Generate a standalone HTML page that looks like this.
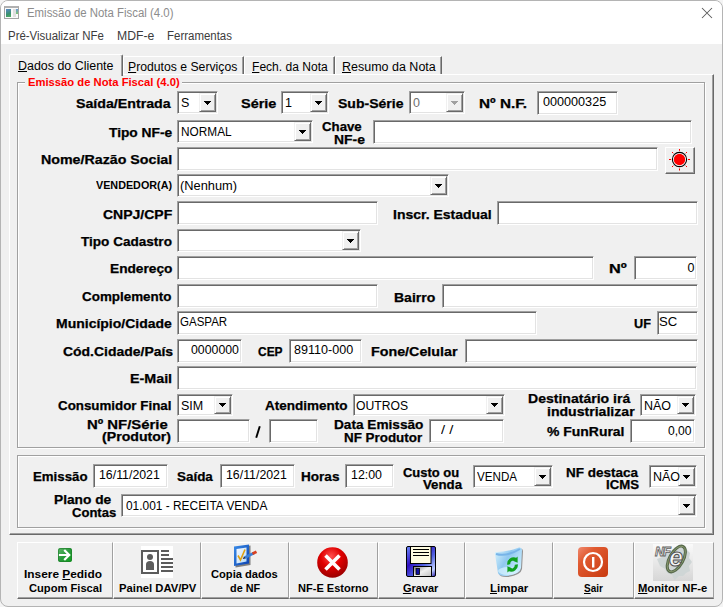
<!DOCTYPE html>
<html><head><meta charset="utf-8"><style>
html,body{margin:0;padding:0;width:723px;height:607px;overflow:hidden;background:#f4f4f4;}
#w{position:absolute;left:0;top:0;width:723px;height:607px;}
u{text-decoration:underline;text-underline-offset:1px;}
</style></head><body><div id="w">

<div style="position:absolute;left:0;top:0;width:723px;height:607px;border-radius:8px;background:#f0f0f0;border:1px solid #b4b4b4;box-sizing:border-box;overflow:hidden">
 <div style="position:absolute;left:0;top:0;width:721px;height:43px;background:#fff"></div>
</div>

<div style="position:absolute;left:4px;top:6px;width:15px;height:13px;border:1px solid #a4a4a4;border-top:2px solid #b0b0b0;box-sizing:border-box;background:#fafafa;"></div><div style="position:absolute;left:6px;top:9px;width:5px;height:8px;background:linear-gradient(160deg,#5a88c8,#3a9070 60%,#50b060);"></div><div style="position:absolute;left:13px;top:9px;width:3px;height:8px;background:#e0e0e0;"></div><div style="position:absolute;left:16px;top:9px;width:2px;height:5px;background:linear-gradient(#6a98d8,#80c870);"></div><svg style="position:absolute;left:700px;top:6px" width="14" height="14"><path d="M2 2 L12 12 M12 2 L2 12" stroke="#5a5a5a" stroke-width="1.05" fill="none"/></svg><div style="position:absolute;left:9px;top:74px;width:705px;height:461px;border-top:1px solid #fff;border-left:1px solid #fff;border-right:1px solid #696969;border-bottom:1px solid #696969;box-sizing:border-box;box-shadow:inset -1px -1px 0 #a0a0a0;"></div><div style="position:absolute;left:123px;top:56px;width:121px;height:18px;border-top:1px solid #fff;border-left:1px solid #fff;border-right:1px solid #696969;box-sizing:border-box;box-shadow:inset -1px 0 0 #a0a0a0;background:#f0f0f0;border-top-left-radius:2px;"></div><div style="position:absolute;left:244px;top:56px;width:91px;height:18px;border-top:1px solid #fff;border-left:1px solid #fff;border-right:1px solid #696969;box-sizing:border-box;box-shadow:inset -1px 0 0 #a0a0a0;background:#f0f0f0;border-top-left-radius:2px;"></div><div style="position:absolute;left:335px;top:56px;width:107px;height:18px;border-top:1px solid #fff;border-left:1px solid #fff;border-right:1px solid #696969;box-sizing:border-box;box-shadow:inset -1px 0 0 #a0a0a0;background:#f0f0f0;border-top-left-radius:2px;"></div><div style="position:absolute;left:9px;top:54px;width:114px;height:22px;border-top:1px solid #fff;border-left:1px solid #fff;border-right:1px solid #696969;box-sizing:border-box;box-shadow:inset -1px 0 0 #a0a0a0;background:#f0f0f0;border-top-left-radius:2px;border-top-right-radius:2px;"></div><div style="position:absolute;left:18px;top:83px;width:688px;height:366px;border:1px solid #fff;box-sizing:border-box;"></div><div style="position:absolute;left:17px;top:82px;width:688px;height:366px;border:1px solid #a0a0a0;box-sizing:border-box;"></div><div style="position:absolute;left:25px;top:78px;width:157px;height:11px;background:#f0f0f0;"></div><svg style="position:absolute;left:250px;top:420px" width="20" height="26"><path d="M9.8 6.2 L6.2 17.8" stroke="#000" stroke-width="1.9"/></svg><div style="position:absolute;left:177px;top:91px;width:41px;height:23px;background:#fff;border-top:1px solid #a0a0a0;border-left:1px solid #a0a0a0;border-right:1px solid #fff;border-bottom:1px solid #fff;box-sizing:border-box;box-shadow:inset 1px 1px 0 #696969, inset -1px -1px 0 #e3e3e3;background:#fff;"></div><div style="position:absolute;left:199px;top:93px;width:17px;height:19px;background:#f0f0f0;border-top:1px solid #f0f0f0;border-left:1px solid #f0f0f0;border-right:1px solid #696969;border-bottom:1px solid #696969;box-sizing:border-box;box-shadow:inset 1px 1px 0 #fff, inset -1px -1px 0 #a0a0a0;"></div><div style="position:absolute;left:204px;top:101px;width:7px;height:1px;background:#000"></div><div style="position:absolute;left:205px;top:102px;width:5px;height:1px;background:#000"></div><div style="position:absolute;left:206px;top:103px;width:3px;height:1px;background:#000"></div><div style="position:absolute;left:207px;top:104px;width:1px;height:1px;background:#000"></div><div style="position:absolute;left:281px;top:91px;width:48px;height:23px;background:#fff;border-top:1px solid #a0a0a0;border-left:1px solid #a0a0a0;border-right:1px solid #fff;border-bottom:1px solid #fff;box-sizing:border-box;box-shadow:inset 1px 1px 0 #696969, inset -1px -1px 0 #e3e3e3;background:#fff;"></div><div style="position:absolute;left:310px;top:93px;width:17px;height:19px;background:#f0f0f0;border-top:1px solid #f0f0f0;border-left:1px solid #f0f0f0;border-right:1px solid #696969;border-bottom:1px solid #696969;box-sizing:border-box;box-shadow:inset 1px 1px 0 #fff, inset -1px -1px 0 #a0a0a0;"></div><div style="position:absolute;left:315px;top:101px;width:7px;height:1px;background:#000"></div><div style="position:absolute;left:316px;top:102px;width:5px;height:1px;background:#000"></div><div style="position:absolute;left:317px;top:103px;width:3px;height:1px;background:#000"></div><div style="position:absolute;left:318px;top:104px;width:1px;height:1px;background:#000"></div><div style="position:absolute;left:409px;top:91px;width:56px;height:23px;background:#fff;border-top:1px solid #a0a0a0;border-left:1px solid #a0a0a0;border-right:1px solid #fff;border-bottom:1px solid #fff;box-sizing:border-box;box-shadow:inset 1px 1px 0 #696969, inset -1px -1px 0 #e3e3e3;background:#fff;"></div><div style="position:absolute;left:446px;top:93px;width:17px;height:19px;background:#f0f0f0;border-top:1px solid #f0f0f0;border-left:1px solid #f0f0f0;border-right:1px solid #696969;border-bottom:1px solid #696969;box-sizing:border-box;box-shadow:inset 1px 1px 0 #fff, inset -1px -1px 0 #a0a0a0;"></div><div style="position:absolute;left:451px;top:101px;width:7px;height:1px;background:#a0a0a0"></div><div style="position:absolute;left:452px;top:102px;width:5px;height:1px;background:#a0a0a0"></div><div style="position:absolute;left:453px;top:103px;width:3px;height:1px;background:#a0a0a0"></div><div style="position:absolute;left:454px;top:104px;width:1px;height:1px;background:#a0a0a0"></div><div style="position:absolute;left:537px;top:91px;width:81px;height:24px;background:#fff;border-top:1px solid #a0a0a0;border-left:1px solid #a0a0a0;border-right:1px solid #fff;border-bottom:1px solid #fff;box-sizing:border-box;box-shadow:inset 1px 1px 0 #696969, inset -1px -1px 0 #e3e3e3;"></div><div style="position:absolute;left:177px;top:120px;width:136px;height:23px;background:#fff;border-top:1px solid #a0a0a0;border-left:1px solid #a0a0a0;border-right:1px solid #fff;border-bottom:1px solid #fff;box-sizing:border-box;box-shadow:inset 1px 1px 0 #696969, inset -1px -1px 0 #e3e3e3;background:#fff;"></div><div style="position:absolute;left:294px;top:122px;width:17px;height:19px;background:#f0f0f0;border-top:1px solid #f0f0f0;border-left:1px solid #f0f0f0;border-right:1px solid #696969;border-bottom:1px solid #696969;box-sizing:border-box;box-shadow:inset 1px 1px 0 #fff, inset -1px -1px 0 #a0a0a0;"></div><div style="position:absolute;left:299px;top:130px;width:7px;height:1px;background:#000"></div><div style="position:absolute;left:300px;top:131px;width:5px;height:1px;background:#000"></div><div style="position:absolute;left:301px;top:132px;width:3px;height:1px;background:#000"></div><div style="position:absolute;left:302px;top:133px;width:1px;height:1px;background:#000"></div><div style="position:absolute;left:373px;top:120px;width:319px;height:24px;background:#fff;border-top:1px solid #a0a0a0;border-left:1px solid #a0a0a0;border-right:1px solid #fff;border-bottom:1px solid #fff;box-sizing:border-box;box-shadow:inset 1px 1px 0 #696969, inset -1px -1px 0 #e3e3e3;"></div><div style="position:absolute;left:177px;top:147px;width:481px;height:24px;background:#fff;border-top:1px solid #a0a0a0;border-left:1px solid #a0a0a0;border-right:1px solid #fff;border-bottom:1px solid #fff;box-sizing:border-box;box-shadow:inset 1px 1px 0 #696969, inset -1px -1px 0 #e3e3e3;"></div><div style="position:absolute;left:177px;top:174px;width:272px;height:23px;background:#fff;border-top:1px solid #a0a0a0;border-left:1px solid #a0a0a0;border-right:1px solid #fff;border-bottom:1px solid #fff;box-sizing:border-box;box-shadow:inset 1px 1px 0 #696969, inset -1px -1px 0 #e3e3e3;background:#fff;"></div><div style="position:absolute;left:430px;top:176px;width:17px;height:19px;background:#f0f0f0;border-top:1px solid #f0f0f0;border-left:1px solid #f0f0f0;border-right:1px solid #696969;border-bottom:1px solid #696969;box-sizing:border-box;box-shadow:inset 1px 1px 0 #fff, inset -1px -1px 0 #a0a0a0;"></div><div style="position:absolute;left:435px;top:184px;width:7px;height:1px;background:#000"></div><div style="position:absolute;left:436px;top:185px;width:5px;height:1px;background:#000"></div><div style="position:absolute;left:437px;top:186px;width:3px;height:1px;background:#000"></div><div style="position:absolute;left:438px;top:187px;width:1px;height:1px;background:#000"></div><div style="position:absolute;left:177px;top:201px;width:201px;height:24px;background:#fff;border-top:1px solid #a0a0a0;border-left:1px solid #a0a0a0;border-right:1px solid #fff;border-bottom:1px solid #fff;box-sizing:border-box;box-shadow:inset 1px 1px 0 #696969, inset -1px -1px 0 #e3e3e3;"></div><div style="position:absolute;left:497px;top:201px;width:201px;height:24px;background:#fff;border-top:1px solid #a0a0a0;border-left:1px solid #a0a0a0;border-right:1px solid #fff;border-bottom:1px solid #fff;box-sizing:border-box;box-shadow:inset 1px 1px 0 #696969, inset -1px -1px 0 #e3e3e3;"></div><div style="position:absolute;left:177px;top:229px;width:184px;height:23px;background:#fff;border-top:1px solid #a0a0a0;border-left:1px solid #a0a0a0;border-right:1px solid #fff;border-bottom:1px solid #fff;box-sizing:border-box;box-shadow:inset 1px 1px 0 #696969, inset -1px -1px 0 #e3e3e3;background:#fff;"></div><div style="position:absolute;left:342px;top:231px;width:17px;height:19px;background:#f0f0f0;border-top:1px solid #f0f0f0;border-left:1px solid #f0f0f0;border-right:1px solid #696969;border-bottom:1px solid #696969;box-sizing:border-box;box-shadow:inset 1px 1px 0 #fff, inset -1px -1px 0 #a0a0a0;"></div><div style="position:absolute;left:347px;top:239px;width:7px;height:1px;background:#000"></div><div style="position:absolute;left:348px;top:240px;width:5px;height:1px;background:#000"></div><div style="position:absolute;left:349px;top:241px;width:3px;height:1px;background:#000"></div><div style="position:absolute;left:350px;top:242px;width:1px;height:1px;background:#000"></div><div style="position:absolute;left:177px;top:256px;width:417px;height:24px;background:#fff;border-top:1px solid #a0a0a0;border-left:1px solid #a0a0a0;border-right:1px solid #fff;border-bottom:1px solid #fff;box-sizing:border-box;box-shadow:inset 1px 1px 0 #696969, inset -1px -1px 0 #e3e3e3;"></div><div style="position:absolute;left:634px;top:256px;width:63px;height:24px;background:#fff;border-top:1px solid #a0a0a0;border-left:1px solid #a0a0a0;border-right:1px solid #fff;border-bottom:1px solid #fff;box-sizing:border-box;box-shadow:inset 1px 1px 0 #696969, inset -1px -1px 0 #e3e3e3;"></div><div style="position:absolute;left:177px;top:284px;width:201px;height:24px;background:#fff;border-top:1px solid #a0a0a0;border-left:1px solid #a0a0a0;border-right:1px solid #fff;border-bottom:1px solid #fff;box-sizing:border-box;box-shadow:inset 1px 1px 0 #696969, inset -1px -1px 0 #e3e3e3;"></div><div style="position:absolute;left:442px;top:284px;width:256px;height:24px;background:#fff;border-top:1px solid #a0a0a0;border-left:1px solid #a0a0a0;border-right:1px solid #fff;border-bottom:1px solid #fff;box-sizing:border-box;box-shadow:inset 1px 1px 0 #696969, inset -1px -1px 0 #e3e3e3;"></div><div style="position:absolute;left:177px;top:311px;width:360px;height:24px;background:#fff;border-top:1px solid #a0a0a0;border-left:1px solid #a0a0a0;border-right:1px solid #fff;border-bottom:1px solid #fff;box-sizing:border-box;box-shadow:inset 1px 1px 0 #696969, inset -1px -1px 0 #e3e3e3;"></div><div style="position:absolute;left:657px;top:311px;width:41px;height:24px;background:#fff;border-top:1px solid #a0a0a0;border-left:1px solid #a0a0a0;border-right:1px solid #fff;border-bottom:1px solid #fff;box-sizing:border-box;box-shadow:inset 1px 1px 0 #696969, inset -1px -1px 0 #e3e3e3;"></div><div style="position:absolute;left:177px;top:339px;width:65px;height:24px;background:#fff;border-top:1px solid #a0a0a0;border-left:1px solid #a0a0a0;border-right:1px solid #fff;border-bottom:1px solid #fff;box-sizing:border-box;box-shadow:inset 1px 1px 0 #696969, inset -1px -1px 0 #e3e3e3;"></div><div style="position:absolute;left:289px;top:339px;width:73px;height:24px;background:#fff;border-top:1px solid #a0a0a0;border-left:1px solid #a0a0a0;border-right:1px solid #fff;border-bottom:1px solid #fff;box-sizing:border-box;box-shadow:inset 1px 1px 0 #696969, inset -1px -1px 0 #e3e3e3;"></div><div style="position:absolute;left:465px;top:339px;width:233px;height:24px;background:#fff;border-top:1px solid #a0a0a0;border-left:1px solid #a0a0a0;border-right:1px solid #fff;border-bottom:1px solid #fff;box-sizing:border-box;box-shadow:inset 1px 1px 0 #696969, inset -1px -1px 0 #e3e3e3;"></div><div style="position:absolute;left:177px;top:366px;width:520px;height:24px;background:#fff;border-top:1px solid #a0a0a0;border-left:1px solid #a0a0a0;border-right:1px solid #fff;border-bottom:1px solid #fff;box-sizing:border-box;box-shadow:inset 1px 1px 0 #696969, inset -1px -1px 0 #e3e3e3;"></div><div style="position:absolute;left:177px;top:394px;width:56px;height:22px;background:#fff;border-top:1px solid #a0a0a0;border-left:1px solid #a0a0a0;border-right:1px solid #fff;border-bottom:1px solid #fff;box-sizing:border-box;box-shadow:inset 1px 1px 0 #696969, inset -1px -1px 0 #e3e3e3;background:#fff;"></div><div style="position:absolute;left:214px;top:396px;width:17px;height:18px;background:#f0f0f0;border-top:1px solid #f0f0f0;border-left:1px solid #f0f0f0;border-right:1px solid #696969;border-bottom:1px solid #696969;box-sizing:border-box;box-shadow:inset 1px 1px 0 #fff, inset -1px -1px 0 #a0a0a0;"></div><div style="position:absolute;left:219px;top:403px;width:7px;height:1px;background:#000"></div><div style="position:absolute;left:220px;top:404px;width:5px;height:1px;background:#000"></div><div style="position:absolute;left:221px;top:405px;width:3px;height:1px;background:#000"></div><div style="position:absolute;left:222px;top:406px;width:1px;height:1px;background:#000"></div><div style="position:absolute;left:353px;top:394px;width:152px;height:22px;background:#fff;border-top:1px solid #a0a0a0;border-left:1px solid #a0a0a0;border-right:1px solid #fff;border-bottom:1px solid #fff;box-sizing:border-box;box-shadow:inset 1px 1px 0 #696969, inset -1px -1px 0 #e3e3e3;background:#fff;"></div><div style="position:absolute;left:486px;top:396px;width:17px;height:18px;background:#f0f0f0;border-top:1px solid #f0f0f0;border-left:1px solid #f0f0f0;border-right:1px solid #696969;border-bottom:1px solid #696969;box-sizing:border-box;box-shadow:inset 1px 1px 0 #fff, inset -1px -1px 0 #a0a0a0;"></div><div style="position:absolute;left:491px;top:403px;width:7px;height:1px;background:#000"></div><div style="position:absolute;left:492px;top:404px;width:5px;height:1px;background:#000"></div><div style="position:absolute;left:493px;top:405px;width:3px;height:1px;background:#000"></div><div style="position:absolute;left:494px;top:406px;width:1px;height:1px;background:#000"></div><div style="position:absolute;left:640px;top:394px;width:56px;height:22px;background:#fff;border-top:1px solid #a0a0a0;border-left:1px solid #a0a0a0;border-right:1px solid #fff;border-bottom:1px solid #fff;box-sizing:border-box;box-shadow:inset 1px 1px 0 #696969, inset -1px -1px 0 #e3e3e3;background:#fff;"></div><div style="position:absolute;left:677px;top:396px;width:17px;height:18px;background:#f0f0f0;border-top:1px solid #f0f0f0;border-left:1px solid #f0f0f0;border-right:1px solid #696969;border-bottom:1px solid #696969;box-sizing:border-box;box-shadow:inset 1px 1px 0 #fff, inset -1px -1px 0 #a0a0a0;"></div><div style="position:absolute;left:682px;top:403px;width:7px;height:1px;background:#000"></div><div style="position:absolute;left:683px;top:404px;width:5px;height:1px;background:#000"></div><div style="position:absolute;left:684px;top:405px;width:3px;height:1px;background:#000"></div><div style="position:absolute;left:685px;top:406px;width:1px;height:1px;background:#000"></div><div style="position:absolute;left:177px;top:419px;width:73px;height:24px;background:#fff;border-top:1px solid #a0a0a0;border-left:1px solid #a0a0a0;border-right:1px solid #fff;border-bottom:1px solid #fff;box-sizing:border-box;box-shadow:inset 1px 1px 0 #696969, inset -1px -1px 0 #e3e3e3;"></div><div style="position:absolute;left:269px;top:419px;width:49px;height:24px;background:#fff;border-top:1px solid #a0a0a0;border-left:1px solid #a0a0a0;border-right:1px solid #fff;border-bottom:1px solid #fff;box-sizing:border-box;box-shadow:inset 1px 1px 0 #696969, inset -1px -1px 0 #e3e3e3;"></div><div style="position:absolute;left:429px;top:419px;width:75px;height:24px;background:#fff;border-top:1px solid #a0a0a0;border-left:1px solid #a0a0a0;border-right:1px solid #fff;border-bottom:1px solid #fff;box-sizing:border-box;box-shadow:inset 1px 1px 0 #696969, inset -1px -1px 0 #e3e3e3;"></div><div style="position:absolute;left:630px;top:419px;width:65px;height:24px;background:#fff;border-top:1px solid #a0a0a0;border-left:1px solid #a0a0a0;border-right:1px solid #fff;border-bottom:1px solid #fff;box-sizing:border-box;box-shadow:inset 1px 1px 0 #696969, inset -1px -1px 0 #e3e3e3;"></div><div style="position:absolute;left:665px;top:147px;width:30px;height:27px;background:#f0f0f0;border-top:1px solid #fff;border-left:1px solid #fff;border-right:1px solid #696969;border-bottom:1px solid #696969;box-sizing:border-box;box-shadow:inset -1px -1px 0 #a0a0a0;"></div><svg style="position:absolute;left:669px;top:149px" width="21" height="22" viewBox="0 0 21 22">
<g stroke="#ff0000" stroke-width="1">
<path d="M10.5 0 v1.8 M10.5 19.5 v2 M0 10.5 h2 M19 10.5 h2 M3 3 l1.3 1.3 M16.7 16.7 l1.3 1.3 M18 3 l-1.3 1.3 M4.3 16.7 l-1.3 1.3"/>
</g>
<circle cx="10.5" cy="10.5" r="7.1" fill="#fff" stroke="#000" stroke-width="1.1"/>
<circle cx="10.5" cy="10.5" r="5.7" fill="#ff0000"/>
</svg><div style="position:absolute;left:18px;top:456px;width:688px;height:73px;border:1px solid #fff;box-sizing:border-box;"></div><div style="position:absolute;left:17px;top:455px;width:688px;height:73px;border:1px solid #a0a0a0;box-sizing:border-box;"></div><div style="position:absolute;left:93px;top:464px;width:75px;height:24px;background:#fff;border-top:1px solid #a0a0a0;border-left:1px solid #a0a0a0;border-right:1px solid #fff;border-bottom:1px solid #fff;box-sizing:border-box;box-shadow:inset 1px 1px 0 #696969, inset -1px -1px 0 #e3e3e3;"></div><div style="position:absolute;left:220px;top:464px;width:75px;height:24px;background:#fff;border-top:1px solid #a0a0a0;border-left:1px solid #a0a0a0;border-right:1px solid #fff;border-bottom:1px solid #fff;box-sizing:border-box;box-shadow:inset 1px 1px 0 #696969, inset -1px -1px 0 #e3e3e3;"></div><div style="position:absolute;left:345px;top:464px;width:49px;height:24px;background:#fff;border-top:1px solid #a0a0a0;border-left:1px solid #a0a0a0;border-right:1px solid #fff;border-bottom:1px solid #fff;box-sizing:border-box;box-shadow:inset 1px 1px 0 #696969, inset -1px -1px 0 #e3e3e3;"></div><div style="position:absolute;left:473px;top:465px;width:80px;height:23px;background:#fff;border-top:1px solid #a0a0a0;border-left:1px solid #a0a0a0;border-right:1px solid #fff;border-bottom:1px solid #fff;box-sizing:border-box;box-shadow:inset 1px 1px 0 #696969, inset -1px -1px 0 #e3e3e3;background:#fff;"></div><div style="position:absolute;left:534px;top:467px;width:17px;height:19px;background:#f0f0f0;border-top:1px solid #f0f0f0;border-left:1px solid #f0f0f0;border-right:1px solid #696969;border-bottom:1px solid #696969;box-sizing:border-box;box-shadow:inset 1px 1px 0 #fff, inset -1px -1px 0 #a0a0a0;"></div><div style="position:absolute;left:539px;top:475px;width:7px;height:1px;background:#000"></div><div style="position:absolute;left:540px;top:476px;width:5px;height:1px;background:#000"></div><div style="position:absolute;left:541px;top:477px;width:3px;height:1px;background:#000"></div><div style="position:absolute;left:542px;top:478px;width:1px;height:1px;background:#000"></div><div style="position:absolute;left:649px;top:465px;width:48px;height:23px;background:#fff;border-top:1px solid #a0a0a0;border-left:1px solid #a0a0a0;border-right:1px solid #fff;border-bottom:1px solid #fff;box-sizing:border-box;box-shadow:inset 1px 1px 0 #696969, inset -1px -1px 0 #e3e3e3;background:#fff;"></div><div style="position:absolute;left:678px;top:467px;width:17px;height:19px;background:#f0f0f0;border-top:1px solid #f0f0f0;border-left:1px solid #f0f0f0;border-right:1px solid #696969;border-bottom:1px solid #696969;box-sizing:border-box;box-shadow:inset 1px 1px 0 #fff, inset -1px -1px 0 #a0a0a0;"></div><div style="position:absolute;left:683px;top:475px;width:7px;height:1px;background:#000"></div><div style="position:absolute;left:684px;top:476px;width:5px;height:1px;background:#000"></div><div style="position:absolute;left:685px;top:477px;width:3px;height:1px;background:#000"></div><div style="position:absolute;left:686px;top:478px;width:1px;height:1px;background:#000"></div><div style="position:absolute;left:121px;top:494px;width:576px;height:23px;background:#fff;border-top:1px solid #a0a0a0;border-left:1px solid #a0a0a0;border-right:1px solid #fff;border-bottom:1px solid #fff;box-sizing:border-box;box-shadow:inset 1px 1px 0 #696969, inset -1px -1px 0 #e3e3e3;background:#fff;"></div><div style="position:absolute;left:678px;top:496px;width:17px;height:19px;background:#f0f0f0;border-top:1px solid #f0f0f0;border-left:1px solid #f0f0f0;border-right:1px solid #696969;border-bottom:1px solid #696969;box-sizing:border-box;box-shadow:inset 1px 1px 0 #fff, inset -1px -1px 0 #a0a0a0;"></div><div style="position:absolute;left:683px;top:504px;width:7px;height:1px;background:#000"></div><div style="position:absolute;left:684px;top:505px;width:5px;height:1px;background:#000"></div><div style="position:absolute;left:685px;top:506px;width:3px;height:1px;background:#000"></div><div style="position:absolute;left:686px;top:507px;width:1px;height:1px;background:#000"></div><div style="position:absolute;left:17px;top:542px;width:96px;height:57px;border-top:1px solid #fff;border-left:1px solid #fff;border-right:1px solid #a0a0a0;border-bottom:1px solid #696969;box-sizing:border-box;box-shadow:inset 0 -1px 0 #a0a0a0;background:#f0f0f0;"></div><div style="position:absolute;left:113px;top:542px;width:88px;height:57px;border-top:1px solid #fff;border-left:1px solid #fff;border-right:1px solid #a0a0a0;border-bottom:1px solid #696969;box-sizing:border-box;box-shadow:inset 0 -1px 0 #a0a0a0;background:#f0f0f0;"></div><div style="position:absolute;left:201px;top:542px;width:88px;height:57px;border-top:1px solid #fff;border-left:1px solid #fff;border-right:1px solid #a0a0a0;border-bottom:1px solid #696969;box-sizing:border-box;box-shadow:inset 0 -1px 0 #a0a0a0;background:#f0f0f0;"></div><div style="position:absolute;left:289px;top:542px;width:89px;height:57px;border-top:1px solid #fff;border-left:1px solid #fff;border-right:1px solid #a0a0a0;border-bottom:1px solid #696969;box-sizing:border-box;box-shadow:inset 0 -1px 0 #a0a0a0;background:#f0f0f0;"></div><div style="position:absolute;left:378px;top:542px;width:87px;height:57px;border-top:1px solid #fff;border-left:1px solid #fff;border-right:1px solid #a0a0a0;border-bottom:1px solid #696969;box-sizing:border-box;box-shadow:inset 0 -1px 0 #a0a0a0;background:#f0f0f0;"></div><div style="position:absolute;left:465px;top:542px;width:88px;height:57px;border-top:1px solid #fff;border-left:1px solid #fff;border-right:1px solid #a0a0a0;border-bottom:1px solid #696969;box-sizing:border-box;box-shadow:inset 0 -1px 0 #a0a0a0;background:#f0f0f0;"></div><div style="position:absolute;left:553px;top:542px;width:81px;height:57px;border-top:1px solid #fff;border-left:1px solid #fff;border-right:1px solid #a0a0a0;border-bottom:1px solid #696969;box-sizing:border-box;box-shadow:inset 0 -1px 0 #a0a0a0;background:#f0f0f0;"></div><div style="position:absolute;left:634px;top:542px;width:80px;height:57px;border-top:1px solid #fff;border-left:1px solid #fff;border-right:1px solid #a0a0a0;border-bottom:1px solid #696969;box-sizing:border-box;box-shadow:inset 0 -1px 0 #a0a0a0;background:#f0f0f0;"></div>
<div id="t0" style="position:absolute;top:2.84px;font:12px 'Liberation Sans', sans-serif;line-height:20px;color:#8c8c8c;white-space:nowrap;transform:scaleX(0.9507);transform-origin:0 0;left:27.45px;">Emissão de Nota Fiscal (4.0)</div><div id="t1" style="position:absolute;top:25.84px;font:12px 'Liberation Sans', sans-serif;line-height:20px;color:#3c3c3c;white-space:nowrap;transform:scaleX(0.9535);transform-origin:0 0;left:7.65px;">Pré-Visualizar NFe</div><div id="t2" style="position:absolute;top:25.84px;font:12px 'Liberation Sans', sans-serif;line-height:20px;color:#3c3c3c;white-space:nowrap;transform:scaleX(1.0171);transform-origin:0 0;left:116.58px;">MDF-e</div><div id="t3" style="position:absolute;top:25.84px;font:12px 'Liberation Sans', sans-serif;line-height:20px;color:#3c3c3c;white-space:nowrap;transform:scaleX(0.9552);transform-origin:0 0;left:166.74px;">Ferramentas</div><div id="t4" style="position:absolute;top:55.84px;font:12px 'Liberation Sans', sans-serif;line-height:20px;color:#000;white-space:nowrap;transform:scaleX(1.0370);transform-origin:0 0;left:18.00px;"><u>D</u>ados do Cliente</div><div id="t5" style="position:absolute;top:56.84px;font:12px 'Liberation Sans', sans-serif;line-height:20px;color:#000;white-space:nowrap;transform:scaleX(1.0178);transform-origin:0 0;left:128.30px;"><u>P</u>rodutos e Serviços</div><div id="t6" style="position:absolute;top:56.84px;font:12px 'Liberation Sans', sans-serif;line-height:20px;color:#000;white-space:nowrap;transform:scaleX(1.0053);transform-origin:0 0;left:252.20px;"><u>F</u>ech. da Nota</div><div id="t7" style="position:absolute;top:56.84px;font:12px 'Liberation Sans', sans-serif;line-height:20px;color:#000;white-space:nowrap;transform:scaleX(1.0411);transform-origin:0 0;left:342.00px;"><u>R</u>esumo da Nota</div><div id="t8" style="position:absolute;top:72.19px;font:bold 11px 'Liberation Sans', sans-serif;line-height:20px;color:#ff0000;white-space:nowrap;transform:scaleX(1.0211);transform-origin:0 0;left:28.38px;">Emissão de Nota Fiscal (4.0)</div><div id="t9" style="position:absolute;top:94.24px;font:bold 12px 'Liberation Sans', sans-serif;line-height:20px;color:#000;white-space:nowrap;transform:scaleX(1.1825);transform-origin:0 0;-webkit-text-stroke:0.25px #000;left:76.40px;">Saída/Entrada</div><div id="t10" style="position:absolute;top:94.24px;font:bold 12px 'Liberation Sans', sans-serif;line-height:20px;color:#000;white-space:nowrap;transform:scaleX(1.2069);transform-origin:0 0;-webkit-text-stroke:0.25px #000;left:241.00px;">Série</div><div id="t11" style="position:absolute;top:94.24px;font:bold 12px 'Liberation Sans', sans-serif;line-height:20px;color:#000;white-space:nowrap;transform:scaleX(1.1679);transform-origin:0 0;-webkit-text-stroke:0.25px #000;left:338.00px;">Sub-Série</div><div id="t12" style="position:absolute;top:94.24px;font:bold 12px 'Liberation Sans', sans-serif;line-height:20px;color:#000;white-space:nowrap;transform:scaleX(1.2750);transform-origin:0 0;-webkit-text-stroke:0.25px #000;left:479.33px;">Nº N.F.</div><div id="t13" style="position:absolute;top:123.14px;font:bold 12px 'Liberation Sans', sans-serif;line-height:20px;color:#000;white-space:nowrap;transform:scaleX(1.1455);transform-origin:0 0;-webkit-text-stroke:0.25px #000;left:108.70px;">Tipo NF-e</div><div id="t14" style="position:absolute;top:116.54px;font:bold 12px 'Liberation Sans', sans-serif;line-height:20px;color:#000;white-space:nowrap;transform:scaleX(1.1028);transform-origin:0 0;-webkit-text-stroke:0.25px #000;left:322.00px;">Chave</div><div id="t15" style="position:absolute;top:129.74px;font:bold 12px 'Liberation Sans', sans-serif;line-height:20px;color:#000;white-space:nowrap;transform:scaleX(1.1577);transform-origin:0 0;-webkit-text-stroke:0.25px #000;left:334.44px;">NF-e</div><div id="t16" style="position:absolute;top:149.74px;font:bold 12px 'Liberation Sans', sans-serif;line-height:20px;color:#000;white-space:nowrap;transform:scaleX(1.1853);transform-origin:0 0;-webkit-text-stroke:0.25px #000;left:41.41px;">Nome/Razão Social</div><div id="t17" style="position:absolute;top:175.73px;font:bold 10px 'Liberation Sans', sans-serif;line-height:20px;color:#000;white-space:nowrap;transform:scaleX(1.0771);transform-origin:0 0;left:96.40px;">VENDEDOR(A)</div><div id="t18" style="position:absolute;top:204.54px;font:bold 12px 'Liberation Sans', sans-serif;line-height:20px;color:#000;white-space:nowrap;transform:scaleX(1.1661);transform-origin:0 0;-webkit-text-stroke:0.25px #000;left:103.00px;">CNPJ/CPF</div><div id="t19" style="position:absolute;top:204.54px;font:bold 12px 'Liberation Sans', sans-serif;line-height:20px;color:#000;white-space:nowrap;transform:scaleX(1.1651);transform-origin:0 0;-webkit-text-stroke:0.25px #000;left:393.13px;">Inscr. Estadual</div><div id="t20" style="position:absolute;top:231.84px;font:bold 12px 'Liberation Sans', sans-serif;line-height:20px;color:#000;white-space:nowrap;transform:scaleX(1.1300);transform-origin:0 0;-webkit-text-stroke:0.25px #000;left:81.40px;">Tipo Cadastro</div><div id="t21" style="position:absolute;top:259.04px;font:bold 12px 'Liberation Sans', sans-serif;line-height:20px;color:#000;white-space:nowrap;transform:scaleX(1.1415);transform-origin:0 0;-webkit-text-stroke:0.25px #000;left:110.16px;">Endereço</div><div id="t22" style="position:absolute;top:259.04px;font:bold 12px 'Liberation Sans', sans-serif;line-height:20px;color:#000;white-space:nowrap;transform:scaleX(1.3583);transform-origin:0 0;-webkit-text-stroke:0.25px #000;left:609.04px;">Nº</div><div id="t23" style="position:absolute;top:287.34px;font:bold 12px 'Liberation Sans', sans-serif;line-height:20px;color:#000;white-space:nowrap;transform:scaleX(1.1175);transform-origin:0 0;-webkit-text-stroke:0.25px #000;left:82.40px;">Complemento</div><div id="t24" style="position:absolute;top:287.54px;font:bold 12px 'Liberation Sans', sans-serif;line-height:20px;color:#000;white-space:nowrap;transform:scaleX(1.1676);transform-origin:0 0;-webkit-text-stroke:0.25px #000;left:393.83px;">Bairro</div><div id="t25" style="position:absolute;top:313.84px;font:bold 12px 'Liberation Sans', sans-serif;line-height:20px;color:#000;white-space:nowrap;transform:scaleX(1.1663);transform-origin:0 0;-webkit-text-stroke:0.25px #000;left:56.33px;">Município/Cidade</div><div id="t26" style="position:absolute;top:313.64px;font:bold 12px 'Liberation Sans', sans-serif;line-height:20px;color:#000;white-space:nowrap;transform:scaleX(1.0562);transform-origin:0 0;-webkit-text-stroke:0.25px #000;left:633.70px;">UF</div><div id="t27" style="position:absolute;top:342.14px;font:bold 12px 'Liberation Sans', sans-serif;line-height:20px;color:#000;white-space:nowrap;transform:scaleX(1.1628);transform-origin:0 0;-webkit-text-stroke:0.25px #000;left:62.50px;">Cód.Cidade/País</div><div id="t28" style="position:absolute;top:341.84px;font:bold 12px 'Liberation Sans', sans-serif;line-height:20px;color:#000;white-space:nowrap;transform:scaleX(0.9960);transform-origin:0 0;-webkit-text-stroke:0.25px #000;left:257.70px;">CEP</div><div id="t29" style="position:absolute;top:341.84px;font:bold 12px 'Liberation Sans', sans-serif;line-height:20px;color:#000;white-space:nowrap;transform:scaleX(1.1903);transform-origin:0 0;-webkit-text-stroke:0.25px #000;left:370.61px;">Fone/Celular</div><div id="t30" style="position:absolute;top:368.64px;font:bold 12px 'Liberation Sans', sans-serif;line-height:20px;color:#000;white-space:nowrap;transform:scaleX(1.1912);transform-origin:0 0;-webkit-text-stroke:0.25px #000;left:130.11px;">E-Mail</div><div id="t31" style="position:absolute;top:395.84px;font:bold 12px 'Liberation Sans', sans-serif;line-height:20px;color:#000;white-space:nowrap;transform:scaleX(1.1118);transform-origin:0 0;-webkit-text-stroke:0.25px #000;left:58.30px;">Consumidor Final</div><div id="t32" style="position:absolute;top:395.84px;font:bold 12px 'Liberation Sans', sans-serif;line-height:20px;color:#000;white-space:nowrap;transform:scaleX(1.1260);transform-origin:0 0;-webkit-text-stroke:0.25px #000;left:265.30px;">Atendimento</div><div id="t33" style="position:absolute;top:388.84px;font:bold 12px 'Liberation Sans', sans-serif;line-height:20px;color:#000;white-space:nowrap;transform:scaleX(1.1701);transform-origin:0 0;-webkit-text-stroke:0.25px #000;left:528.23px;">Destinatário irá</div><div id="t34" style="position:absolute;top:401.74px;font:bold 12px 'Liberation Sans', sans-serif;line-height:20px;color:#000;white-space:nowrap;transform:scaleX(1.1730);transform-origin:0 0;-webkit-text-stroke:0.25px #000;left:547.03px;">industrializar</div><div id="t35" style="position:absolute;top:415.04px;font:bold 12px 'Liberation Sans', sans-serif;line-height:20px;color:#000;white-space:nowrap;transform:scaleX(1.2406);transform-origin:0 0;-webkit-text-stroke:0.25px #000;left:86.96px;">Nº NF/Série</div><div id="t36" style="position:absolute;top:427.44px;font:bold 12px 'Liberation Sans', sans-serif;line-height:20px;color:#000;white-space:nowrap;transform:scaleX(1.1776);transform-origin:0 0;-webkit-text-stroke:0.25px #000;left:102.00px;">(Produtor)</div><div id="t37" style="position:absolute;top:415.14px;font:bold 12px 'Liberation Sans', sans-serif;line-height:20px;color:#000;white-space:nowrap;transform:scaleX(1.1364);transform-origin:0 0;-webkit-text-stroke:0.25px #000;left:333.86px;">Data Emissão</div><div id="t38" style="position:absolute;top:427.84px;font:bold 12px 'Liberation Sans', sans-serif;line-height:20px;color:#000;white-space:nowrap;transform:scaleX(1.1159);transform-origin:0 0;-webkit-text-stroke:0.25px #000;left:344.38px;">NF Produtor</div><div id="t39" style="position:absolute;top:422.04px;font:bold 12px 'Liberation Sans', sans-serif;line-height:20px;color:#000;white-space:nowrap;transform:scaleX(1.1621);transform-origin:0 0;-webkit-text-stroke:0.25px #000;left:547.30px;">% FunRural</div><div id="t40" style="position:absolute;top:92.67px;font:12.5px 'Liberation Sans', sans-serif;line-height:20px;color:#000;white-space:nowrap;transform:scaleX(1.0000);transform-origin:0 0;left:181.00px;">S</div><div id="t41" style="position:absolute;top:92.67px;font:12.5px 'Liberation Sans', sans-serif;line-height:20px;color:#000;white-space:nowrap;transform:scaleX(1.0000);transform-origin:0 0;left:285.00px;">1</div><div id="t42" style="position:absolute;top:92.67px;font:12.5px 'Liberation Sans', sans-serif;line-height:20px;color:#707070;white-space:nowrap;transform:scaleX(1.0000);transform-origin:0 0;left:413.00px;">0</div><div id="t43" style="position:absolute;top:92.17px;font:12.5px 'Liberation Sans', sans-serif;line-height:20px;color:#000;white-space:nowrap;transform:scaleX(1.0097);transform-origin:0 0;left:543.40px;">000000325</div><div id="t44" style="position:absolute;top:122.17px;font:12.5px 'Liberation Sans', sans-serif;line-height:20px;color:#000;white-space:nowrap;transform:scaleX(0.9462);transform-origin:0 0;left:180.55px;">NORMAL</div><div id="t45" style="position:absolute;top:176.17px;font:12.5px 'Liberation Sans', sans-serif;line-height:20px;color:#000;white-space:nowrap;transform:scaleX(1.0259);transform-origin:0 0;left:180.47px;">(Nenhum)</div><div id="t46" style="position:absolute;top:258.17px;font:12.5px 'Liberation Sans', sans-serif;line-height:20px;color:#000;white-space:nowrap;transform:scaleX(1.0000);transform-origin:0 0;left:687.60px;">0</div><div id="t47" style="position:absolute;top:312.17px;font:12.5px 'Liberation Sans', sans-serif;line-height:20px;color:#000;white-space:nowrap;transform:scaleX(0.9220);transform-origin:0 0;left:179.68px;">GASPAR</div><div id="t48" style="position:absolute;top:312.17px;font:12.5px 'Liberation Sans', sans-serif;line-height:20px;color:#000;white-space:nowrap;transform:scaleX(1.0500);transform-origin:0 0;left:659.35px;">SC</div><div id="t49" style="position:absolute;top:340.17px;font:12.5px 'Liberation Sans', sans-serif;line-height:20px;color:#000;white-space:nowrap;transform:scaleX(0.9854);transform-origin:0 0;left:190.90px;">0000000</div><div id="t50" style="position:absolute;top:340.17px;font:12.5px 'Liberation Sans', sans-serif;line-height:20px;color:#000;white-space:nowrap;transform:scaleX(1.0052);transform-origin:0 0;left:294.19px;">89110-000</div><div id="t51" style="position:absolute;top:395.67px;font:12.5px 'Liberation Sans', sans-serif;line-height:20px;color:#000;white-space:nowrap;transform:scaleX(1.0000);transform-origin:0 0;left:181.00px;">SIM</div><div id="t52" style="position:absolute;top:396.17px;font:12.5px 'Liberation Sans', sans-serif;line-height:20px;color:#000;white-space:nowrap;transform:scaleX(0.9731);transform-origin:0 0;left:356.23px;">OUTROS</div><div id="t53" style="position:absolute;top:395.67px;font:12.5px 'Liberation Sans', sans-serif;line-height:20px;color:#000;white-space:nowrap;transform:scaleX(1.0000);transform-origin:0 0;left:644.00px;">NÃO</div><div id="t54" style="position:absolute;top:420.17px;font:12.5px 'Liberation Sans', sans-serif;line-height:20px;color:#000;white-space:nowrap;transform:scaleX(1.1818);transform-origin:0 0;left:440.70px;">/ /</div><div id="t55" style="position:absolute;top:421.17px;font:12.5px 'Liberation Sans', sans-serif;line-height:20px;color:#000;white-space:nowrap;transform:scaleX(0.9667);transform-origin:0 0;left:668.30px;">0,00</div><div id="t56" style="position:absolute;top:466.94px;font:bold 12px 'Liberation Sans', sans-serif;line-height:20px;color:#000;white-space:nowrap;transform:scaleX(1.1042);transform-origin:0 0;-webkit-text-stroke:0.25px #000;left:32.60px;">Emissão</div><div id="t57" style="position:absolute;top:466.94px;font:bold 12px 'Liberation Sans', sans-serif;line-height:20px;color:#000;white-space:nowrap;transform:scaleX(1.1187);transform-origin:0 0;-webkit-text-stroke:0.25px #000;left:177.30px;">Saída</div><div id="t58" style="position:absolute;top:466.94px;font:bold 12px 'Liberation Sans', sans-serif;line-height:20px;color:#000;white-space:nowrap;transform:scaleX(1.1303);transform-origin:0 0;-webkit-text-stroke:0.25px #000;left:300.87px;">Horas</div><div id="t59" style="position:absolute;top:462.64px;font:bold 12px 'Liberation Sans', sans-serif;line-height:20px;color:#000;white-space:nowrap;transform:scaleX(1.0808);transform-origin:0 0;-webkit-text-stroke:0.25px #000;left:403.30px;">Custo ou</div><div id="t60" style="position:absolute;top:474.94px;font:bold 12px 'Liberation Sans', sans-serif;line-height:20px;color:#000;white-space:nowrap;transform:scaleX(1.1056);transform-origin:0 0;-webkit-text-stroke:0.25px #000;left:423.20px;">Venda</div><div id="t61" style="position:absolute;top:462.64px;font:bold 12px 'Liberation Sans', sans-serif;line-height:20px;color:#000;white-space:nowrap;transform:scaleX(1.1254);transform-origin:0 0;-webkit-text-stroke:0.25px #000;left:565.87px;">NF destaca</div><div id="t62" style="position:absolute;top:474.94px;font:bold 12px 'Liberation Sans', sans-serif;line-height:20px;color:#000;white-space:nowrap;transform:scaleX(1.1000);transform-origin:0 0;-webkit-text-stroke:0.25px #000;left:605.80px;">ICMS</div><div id="t63" style="position:absolute;top:489.84px;font:bold 12px 'Liberation Sans', sans-serif;line-height:20px;color:#000;white-space:nowrap;transform:scaleX(1.1429);transform-origin:0 0;-webkit-text-stroke:0.25px #000;left:54.46px;">Plano de</div><div id="t64" style="position:absolute;top:503.04px;font:bold 12px 'Liberation Sans', sans-serif;line-height:20px;color:#000;white-space:nowrap;transform:scaleX(1.0875);transform-origin:0 0;-webkit-text-stroke:0.25px #000;left:71.80px;">Contas</div><div id="t65" style="position:absolute;top:465.17px;font:12.5px 'Liberation Sans', sans-serif;line-height:20px;color:#000;white-space:nowrap;transform:scaleX(0.9867);transform-origin:0 0;left:99.21px;">16/11/2021</div><div id="t66" style="position:absolute;top:465.17px;font:12.5px 'Liberation Sans', sans-serif;line-height:20px;color:#000;white-space:nowrap;transform:scaleX(0.9867);transform-origin:0 0;left:226.11px;">16/11/2021</div><div id="t67" style="position:absolute;top:465.17px;font:12.5px 'Liberation Sans', sans-serif;line-height:20px;color:#000;white-space:nowrap;transform:scaleX(0.9900);transform-origin:0 0;left:351.01px;">12:00</div><div id="t68" style="position:absolute;top:467.17px;font:12.5px 'Liberation Sans', sans-serif;line-height:20px;color:#000;white-space:nowrap;transform:scaleX(0.9302);transform-origin:0 0;left:477.00px;">VENDA</div><div id="t69" style="position:absolute;top:466.67px;font:12.5px 'Liberation Sans', sans-serif;line-height:20px;color:#000;white-space:nowrap;transform:scaleX(1.0000);transform-origin:0 0;left:653.00px;">NÃO</div><div id="t70" style="position:absolute;top:496.17px;font:12.5px 'Liberation Sans', sans-serif;line-height:20px;color:#000;white-space:nowrap;transform:scaleX(0.9527);transform-origin:0 0;left:125.70px;">01.001 - RECEITA VENDA</div><div id="t71" style="position:absolute;top:564.19px;font:bold 11px 'Liberation Sans', sans-serif;line-height:20px;color:#000;white-space:nowrap;transform:scaleX(1.0803);transform-origin:0 0;left:23.92px;">Insere <u>P</u>edido</div><div id="t72" style="position:absolute;top:578.09px;font:bold 11px 'Liberation Sans', sans-serif;line-height:20px;color:#000;white-space:nowrap;transform:scaleX(1.0139);transform-origin:0 0;left:28.70px;">Cupom Fiscal</div><div id="t73" style="position:absolute;top:578.09px;font:bold 11px 'Liberation Sans', sans-serif;line-height:20px;color:#000;white-space:nowrap;transform:scaleX(1.0227);transform-origin:0 0;left:118.58px;">Painel DAV/PV</div><div id="t74" style="position:absolute;top:564.19px;font:bold 11px 'Liberation Sans', sans-serif;line-height:20px;color:#000;white-space:nowrap;transform:scaleX(1.0121);transform-origin:0 0;left:210.50px;">Copia dados</div><div id="t75" style="position:absolute;top:578.09px;font:bold 11px 'Liberation Sans', sans-serif;line-height:20px;color:#000;white-space:nowrap;transform:scaleX(0.9867);transform-origin:0 0;left:230.00px;">de NF</div><div id="t76" style="position:absolute;top:578.09px;font:bold 11px 'Liberation Sans', sans-serif;line-height:20px;color:#000;white-space:nowrap;transform:scaleX(1.0029);transform-origin:0 0;left:298.00px;">NF-E Estorno</div><div id="t77" style="position:absolute;top:578.09px;font:bold 11px 'Liberation Sans', sans-serif;line-height:20px;color:#000;white-space:nowrap;transform:scaleX(1.0000);transform-origin:0 0;left:402.90px;"><u>G</u>ravar</div><div id="t78" style="position:absolute;top:578.09px;font:bold 11px 'Liberation Sans', sans-serif;line-height:20px;color:#000;white-space:nowrap;transform:scaleX(1.0432);transform-origin:0 0;left:490.40px;"><u>L</u>impar</div><div id="t79" style="position:absolute;top:578.09px;font:bold 11px 'Liberation Sans', sans-serif;line-height:20px;color:#000;white-space:nowrap;transform:scaleX(0.9048);transform-origin:0 0;left:584.30px;"><u>S</u>air</div><div id="t80" style="position:absolute;top:578.09px;font:bold 11px 'Liberation Sans', sans-serif;line-height:20px;color:#000;white-space:nowrap;transform:scaleX(1.0206);transform-origin:0 0;left:638.20px;"><u>M</u>onitor NF-e</div>

<svg style="position:absolute;left:58px;top:548px" width="14" height="14" viewBox="0 0 14 14">
 <defs><linearGradient id="gg" x1="0" y1="0" x2="1" y2="1"><stop offset="0" stop-color="#5fb86a"/><stop offset="0.5" stop-color="#2a9a3c"/><stop offset="1" stop-color="#10a020"/></linearGradient></defs>
 <rect x="0" y="0" width="14" height="14" rx="2" fill="url(#gg)"/>
 <rect x="0.5" y="0.5" width="13" height="13" rx="2" fill="none" stroke="#1d7a28" stroke-width="1" opacity="0.6"/>
 <path d="M2 7 H11 M7 2.8 L11.2 7 L7 11.2" stroke="#fff" stroke-width="2.2" fill="none" stroke-linecap="square"/>
</svg>
<div style="position:absolute;left:141px;top:546px;width:32px;height:32px;background:#fff"></div>
<svg style="position:absolute;left:141px;top:546px" width="32" height="32" viewBox="0 0 32 32">
 <rect x="1" y="5" width="16" height="22" fill="none" stroke="#5c5c5c" stroke-width="2"/>
 <circle cx="9" cy="11" r="3" fill="#5c5c5c"/>
 <path d="M5 24 V18.5 Q5 15 9 15 Q13 15 13 18.5 V24 Z" fill="#5c5c5c"/>
 <g stroke="#5c5c5c" stroke-width="2">
 <path d="M20 5 H28 M20 9 H28 M20 13 H32 M20 17 H32 M20 21 H32 M20 25 H32"/>
 </g>
</svg>
<svg style="position:absolute;left:232px;top:543px" width="28" height="26" viewBox="0 0 28 26">
 <defs><linearGradient id="bl" x1="0" y1="0" x2="1" y2="1"><stop offset="0" stop-color="#3a8de8"/><stop offset="1" stop-color="#0a40b0"/></linearGradient>
 <linearGradient id="pp" x1="0" y1="0" x2="1" y2="1"><stop offset="0" stop-color="#f4f8ff"/><stop offset="1" stop-color="#b8dcf8"/></linearGradient></defs>
 <path d="M2.5 3.5 L17.5 1.5 L17.5 21 L2.5 23.5 Z" fill="#222" opacity="0.55" transform="translate(1,1)"/>
 <path d="M2 3.5 L17 1.5 L17 20.5 L2 23 Z" fill="url(#bl)"/>
 <path d="M4.5 6 L14.5 4.5 L14.5 18.5 L4.5 20.5 Z" fill="url(#pp)"/>
 <path d="M6 12.5 L8.5 17 L13 6.5" stroke="#e0a010" stroke-width="1.6" fill="none"/>
 <path d="M12 15 L22 10" stroke="#3a80d8" stroke-width="2.6"/>
 <path d="M20.5 10.8 L24.5 8.8" stroke="#d84020" stroke-width="2.8"/>
 <path d="M11 15.5 L13 14.5" stroke="#402010" stroke-width="1.2"/>
</svg>
<svg style="position:absolute;left:316px;top:546px" width="33" height="33" viewBox="0 0 33 33">
 <defs><radialGradient id="rx" cx="0.45" cy="0.3" r="0.75"><stop offset="0" stop-color="#ff5050"/><stop offset="0.45" stop-color="#e00000"/><stop offset="1" stop-color="#900000"/></radialGradient></defs>
 <circle cx="16.5" cy="16.5" r="15.3" fill="url(#rx)"/>
 <path d="M9.5 9.5 L23.5 23.5 M23.5 9.5 L9.5 23.5" stroke="#fff" stroke-width="3.6"/>
</svg>
<svg style="position:absolute;left:406px;top:546px" width="30" height="31" viewBox="0 0 30 31">
 <defs><linearGradient id="fl" x1="0" y1="0" x2="1" y2="1"><stop offset="0" stop-color="#7090ff"/><stop offset="0.35" stop-color="#3010c0"/><stop offset="0.6" stop-color="#5060e0"/><stop offset="0.85" stop-color="#c0d0ff"/><stop offset="1" stop-color="#2010a0"/></linearGradient>
 <linearGradient id="sh" x1="0" y1="0" x2="1" y2="1"><stop offset="0" stop-color="#808080"/><stop offset="0.5" stop-color="#f0f0f0"/><stop offset="1" stop-color="#c0c0c0"/></linearGradient></defs>
 <rect x="0.5" y="0.5" width="29" height="30" rx="1.5" fill="url(#fl)" stroke="#000" stroke-width="1"/>
 <rect x="4.5" y="0.5" width="20.5" height="17" fill="#fffce0" stroke="#000" stroke-width="1"/>
 <path d="M7 3.5 H23 M7 6.5 H23 M7 9.5 H23" stroke="#000" stroke-width="1"/>
 <rect x="7.5" y="20.5" width="18" height="10" fill="url(#sh)" stroke="#000" stroke-width="1"/>
 <rect x="10" y="22.5" width="3.5" height="6" fill="#1010a0" stroke="#000" stroke-width="0.8"/>
</svg>
<svg style="position:absolute;left:493px;top:546px" width="32" height="32" viewBox="0 0 32 32">
 <defs><linearGradient id="rb" x1="0" y1="0" x2="1" y2="0.6"><stop offset="0" stop-color="#e0f8ff"/><stop offset="0.5" stop-color="#90c8f0"/><stop offset="1" stop-color="#c8ecff"/></linearGradient></defs>
 <path d="M2 8 Q1 6 4 6 Q14 6 26 1.5 Q29 1 29 4 L28 22 Q27 28 14 30 Q6 30.5 5 27 Z" fill="#555" opacity="0.6" transform="translate(1,1)"/>
 <path d="M2 8 Q1 6 4 6 Q14 6 26 1.5 Q29 1 29 4 L28 22 Q27 28 14 30 Q6 30.5 5 27 Z" fill="url(#rb)"/>
 <path d="M3 8 Q14 11 27 3" stroke="#78b4e8" stroke-width="2" fill="none"/>
 <ellipse cx="15" cy="25" rx="10" ry="4" fill="#d8f4ff" opacity="0.7"/>
 <g transform="translate(19.5 18.5) scale(0.85) translate(-18 -18.5)">
 <path d="M13.5 18.5 A6 6 0 0 1 22 12.5" stroke="#10a020" stroke-width="3.6" fill="none"/>
 <path d="M24 9 L24 16.5 L18.5 14 Z" fill="#10a020"/>
 <path d="M22.5 18.5 A6 6 0 0 1 14 24.5" stroke="#10a020" stroke-width="3.6" fill="none"/>
 <path d="M12 28 L12 20.5 L17.5 23 Z" fill="#10a020"/>
 </g>
</svg>
<svg style="position:absolute;left:578px;top:547px" width="30" height="30" viewBox="0 0 30 30">
 <defs><linearGradient id="sr" x1="0" y1="0" x2="1" y2="1"><stop offset="0" stop-color="#f08a70"/><stop offset="0.3" stop-color="#e05a30"/><stop offset="1" stop-color="#c83a10"/></linearGradient></defs>
 <rect x="0" y="0" width="30" height="30" rx="4" fill="url(#sr)"/>
 <circle cx="15" cy="15" r="9" fill="none" stroke="#fff" stroke-width="2.2"/>
 <rect x="14" y="10" width="2.4" height="10.5" fill="#fff"/>
</svg>
<svg style="position:absolute;left:653px;top:544px" width="40" height="37" viewBox="0 0 40 37">
 <defs><linearGradient id="nb" x1="0" y1="0" x2="0" y2="1"><stop offset="0" stop-color="#fafafa"/><stop offset="1" stop-color="#d6d6d6"/></linearGradient></defs>
 <rect x="0" y="0" width="40" height="37" fill="url(#nb)"/>
 <path d="M4 15 L9 13 L13 8 L18 7 L22 3 L27 4 L31 2 L34 6 L37 9 L36 14 L39 18 L36 22 L37 27 L33 29 L30 32 L26 32 L21.5 36 L19 31 L14 29 L12 25 L7 22 Z" fill="#cfd6d6"/>
 <ellipse cx="23.3" cy="15" rx="6.8" ry="14.2" transform="rotate(29 23.3 15)" fill="none" stroke="#56684a" stroke-width="3"/>
 <ellipse cx="23.3" cy="15" rx="6.8" ry="14.2" transform="rotate(29 23.3 15)" fill="none" stroke="#a0b080" stroke-width="0.6"/>
 <text x="2" y="12" font-family="Liberation Sans" font-weight="bold" font-style="italic" font-size="12.5" fill="#f4f4f4" stroke="#606060" stroke-width="0.8" letter-spacing="-0.8">NF</text>
 <text x="16" y="21.8" font-family="Liberation Sans" font-weight="bold" font-style="italic" font-size="25" fill="#f6f6f6" stroke="#505050" stroke-width="1">e</text>
</svg>

</div></body></html>
